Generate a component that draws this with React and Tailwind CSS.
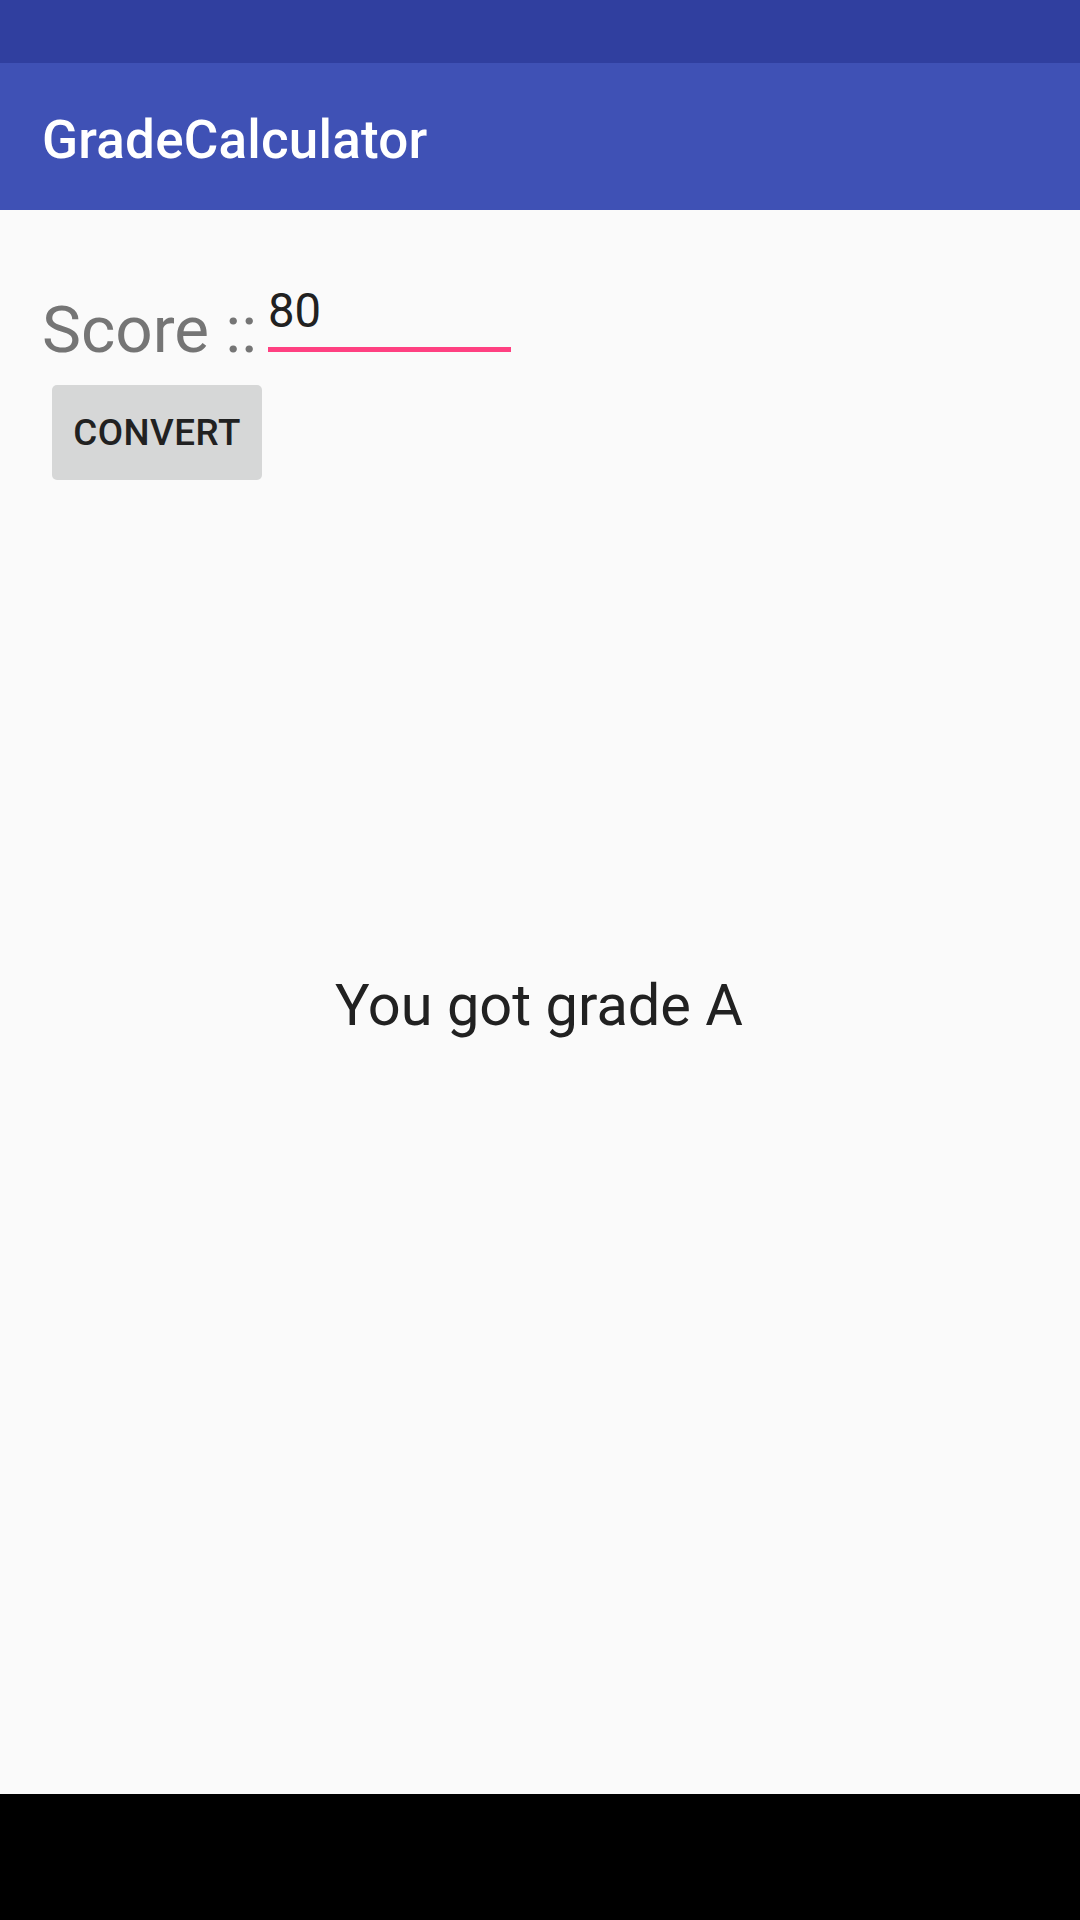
export default function App() {
  return (
    <div className="w-[1080px] h-[1920px] flex flex-col bg-[#FAFAFA] font-['Roboto',sans-serif]">
      <div className="h-[63px] bg-[#303F9F]" />
      <header className="h-[147px] bg-[#3F51B5] flex items-center pl-[42px] pt-[8px]">
        <h1 className="text-[53px] leading-none font-medium text-white tracking-[0.2px]">GradeCalculator</h1>
      </header>

      <main className="flex-1 flex flex-col">
        <div className="flex items-start mt-[74px] pl-[42px]">
          <span className="w-[226px] mt-[7px] text-[65.6px] leading-[77px] text-[#757575]">Score ::</span>
          <div className="w-[243px] flex flex-col">
            <span className="text-[47.25px] leading-[55px] text-[#212121]">80</span>
            <div className="mt-[8px] h-[5px] bg-[#FF4081]" />
          </div>
        </div>

        <button className="ml-[52px] mt-[17px] w-[210px] h-[95px] rounded-[5px] bg-[#D6D7D7] text-[36.75px] font-medium text-[#212121] tracking-[0.5px] flex items-center justify-center">
          CONVERT
        </button>

        <p className="mt-[491px] pr-[2px] text-center text-[57.75px] leading-[68px] text-[#212121]">You got grade A</p>
      </main>

      <div className="h-[126px] bg-black" />
    </div>
  );
}
